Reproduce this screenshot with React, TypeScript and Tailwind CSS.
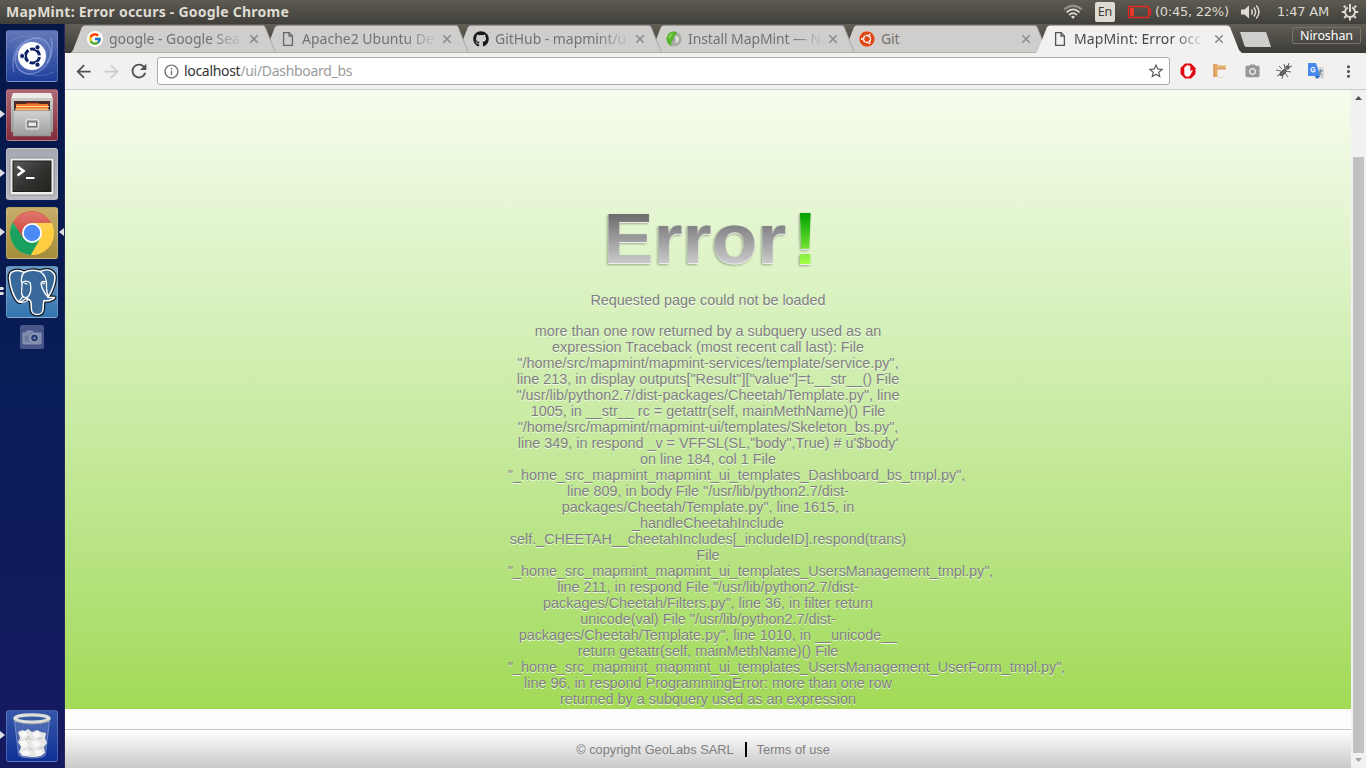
import React from "react";
import { FcGoogle } from "react-icons/fc";
import { FaUbuntu, FaGithub } from "react-icons/fa";
import {
  MdArrowBack,
  MdArrowForward,
  MdRefresh,
  MdInfoOutline,
  MdStarBorder,
  MdMoreVert,
  MdPhotoCamera,
} from "react-icons/md";

const ui = "font-['Noto_Sans',sans-serif]";

function PageIcon({ color }: { color: string }) {
  return (
    <svg width="16" height="16" viewBox="0 0 16 16" fill="none" stroke={color} strokeWidth="1.3">
      <path d="M3.6 1.6h5.6l3.2 3.4v9.4H3.6z" />
      <path d="M9 1.8v3.4h3.2" />
    </svg>
  );
}

function MintIcon() {
  return (
    <svg width="16" height="16" viewBox="0 0 16 16">
      <circle cx="8" cy="8" r="7.6" fill="#a9aca5" />
      <path d="M8 .4a7.6 7.6 0 0 0-2 14.900C3.500 11 7.500 9.500 7.800 7 8 4 10.500 3.500 11 1 10 .5 9 .4 8 .4z" fill="#55b82c" />
      <path d="M9.500 5c2.500 0 3.600 2 3.200 4-.5 2.300-2.600 3.200-4.200 2.700 1.600-1.200 2-2.400 1.400-3.700-.5-1-.9-1.800-.4-3z" fill="#e3e4e2" />
      <path d="M2.500 6c1-2.500 3-3.500 5-3.500-2 1.500-3 3-3.500 6z" fill="#8fdc5e" />
    </svg>
  );
}

function CloseX() {
  return (
    <svg width="10" height="10" viewBox="0 0 10 10" stroke="#8b8a89" strokeWidth="1.6">
      <path d="M1.300 1.300l7.400 7.400M8.700 1.300L1.300 8.700" />
    </svg>
  );
}

function TabShape({ fill, active }: { fill: string; active?: boolean }) {
  return (
    <svg className="absolute inset-0" width="206" height="28" viewBox="0 0 206 28">
      <path d="M0 28 L2 25 L11 2 Q12 .5 14 .5 H191 Q193 .5 194 2 L203 25 L206 28Z" fill={fill} />
      {!active && <path d="M192 .5Q193.500 .5 194 2 L204.500 27.500" fill="none" stroke="#aaa9a6" strokeWidth="1" />}
      {!active && <path d="M0 27.500H206" stroke="#b3b1ae" />}
    </svg>
  );
}

type TabData = { title: string; icon: React.ReactNode; spacing: string; fade: boolean; layer: string };

const tabs: TabData[] = [
  {
    title: "google - Google Sea",
    icon: (
      <span className="flex size-4 items-center justify-center rounded-full bg-white">
        <FcGoogle size={14} />
      </span>
    ),
    spacing: "tracking-[-0.05px]",
    fade: true,
    layer: "z-[5]",
  },
  {
    title: "Apache2 Ubuntu De",
    icon: <PageIcon color="#6a6967" />,
    spacing: "tracking-[0px]",
    fade: true,
    layer: "z-[4]",
  },
  {
    title: "GitHub - mapmint/u",
    icon: <FaGithub size={16} color="#191717" />,
    spacing: "tracking-[-0.05px]",
    fade: true,
    layer: "z-[3]",
  },
  {
    title: "Install MapMint — N",
    icon: <MintIcon />,
    spacing: "tracking-[-0.1px]",
    fade: true,
    layer: "z-[2]",
  },
  {
    title: "Git",
    icon: (
      <span className="flex size-4 items-center justify-center rounded-full bg-white">
        <FaUbuntu size={16} color="#dd4814" />
      </span>
    ),
    spacing: "tracking-[-0.2px]",
    fade: false,
    layer: "z-[1]",
  },
  {
    title: "MapMint: Error occ",
    icon: <PageIcon color="#555" />,
    spacing: "tracking-[0.1px]",
    fade: true,
    layer: "z-10",
  },
];

function Tab({ tab, active }: { tab: TabData; active: boolean }) {
  return (
    <div className={`relative mr-[-13px] h-7 w-[206px] shrink-0 ${tab.layer}`}>
      <TabShape fill={active ? "#f2f1f0" : "#d0cecd"} active={active} />
      <div className="relative flex h-7 items-center pl-4">
        <div className="flex size-4 shrink-0">{tab.icon}</div>
        <div className="ml-1.5 w-[134px] shrink-0">
          <span
            className={`inline-block whitespace-nowrap text-[14px] leading-7 ${ui} ${tab.spacing} ${
              active ? "text-[#4b4a49]" : "text-[#737271]"
            } ${tab.fade ? "[mask-image:linear-gradient(to_right,#000_78%,transparent_103%)]" : ""}`}
          >
            {tab.title}
          </span>
        </div>
        <div className="ml-1.5">
          <CloseX />
        </div>
      </div>
    </div>
  );
}

function TopPanel() {
  return (
    <div className="flex h-6 shrink-0 items-center bg-linear-to-b from-[#5d5b51] to-[#403f3a] text-[#dfdbd2]">
      <div className={`pl-1.5 text-[14px] font-bold leading-6 tracking-[0.240px] whitespace-nowrap ${ui}`}>
        MapMint: Error occurs - Google Chrome
      </div>
      <div className="ml-auto flex h-6 items-center pr-[7px] font-['DejaVu_Sans',sans-serif] text-[13px]">
        <svg width="20" height="16" viewBox="0 0 20 16" fill="none" strokeLinecap="butt">
          <path d="M1 5.500Q10-2 19 5.500" stroke="#98958c" strokeWidth="1.700" />
          <path d="M3.500 8.300Q10 2.500 16.500 8.300" stroke="#dfdbd2" strokeWidth="1.700" />
          <path d="M6 11Q10 7.300 14 11" stroke="#dfdbd2" strokeWidth="1.700" />
          <path d="M8 12.500Q10 11 12 12.500L10 15z" fill="#dfdbd2" />
        </svg>
        <div className={`ml-3 flex h-5 w-5 items-center justify-center rounded-[2px] bg-[#dfdbd2] text-[12.500px] text-[#3c3b37] ${ui}`}>
          En
        </div>
        <svg className="ml-3" width="25" height="14" viewBox="0 0 25 14">
          <path d="M1.500 1.500h20v11h-20zM22 4.500h1.500v5H22" fill="none" stroke="#e5281f" strokeWidth="1.300" />
          <rect x="3" y="3" width="4" height="8" fill="#e5382f" />
        </svg>
        <div className="ml-[3px] w-[74px] whitespace-nowrap tracking-[-0.250px]">(0:45, 22%)</div>
        <svg className="ml-[11px]" width="21" height="16" viewBox="0 0 21 16">
          <path d="M1 5.500h3.500L9 1.500v13L4.500 10.500H1z" fill="#dfdbd2" />
          <path d="M11.300 5.500q2 2.500 0 5M13.800 3.500q3.600 4.500 0 9M16.300 1.500q5.400 6.500 0 13" fill="none" stroke="#dfdbd2" strokeWidth="1.500" />
        </svg>
        <div className="ml-4 w-[52px] whitespace-nowrap tracking-[-0.200px]">1:47 AM</div>
        <svg className="ml-3" width="18" height="18" viewBox="0 0 18 18" fill="none" stroke="#dfdbd2">
          <path d="M6.800 4.500a5 5 0 1 0 4.400 0" strokeWidth="2" />
          <path d="M9 1v8" strokeWidth="2" />
          <path d="M4.500 4.500L2.800 2.800M13.500 4.500l1.700-1.700M3.500 9H.8M14.500 9h2.700M5 13l-1.800 2M13 13l1.800 2M9 15v2.500" strokeWidth="2" />
        </svg>
      </div>
    </div>
  );
}

function Tile({
  className,
  children,
  running,
  focused,
}: {
  className: string;
  children: React.ReactNode;
  running?: number;
  focused?: boolean;
}) {
  return (
    <div className={`relative mx-auto size-[52px] shrink-0 rounded-[3px] border border-white/20 ${className}`}>
      <div className="-m-px">{children}</div>
      {running === 1 && (
        <svg className="absolute top-[19px] -left-[7px]" width="5" height="10" viewBox="0 0 5 10">
          <path d="M0 1l5 4-5 4z" fill="#dcdee4" />
        </svg>
      )}
      {running === 2 && (
        <svg className="absolute top-[20px] -left-[7px]" width="5" height="8" viewBox="0 0 5 8">
          <path d="M0 0h3l1 1.500L3 3H0zM0 5h3l1 1.500L3 8H0z" fill="#dcdee4" />
        </svg>
      )}
      {focused && (
        <svg className="absolute top-[19px] -right-[7px]" width="5" height="10" viewBox="0 0 5 10">
          <path d="M5 1L0 5l5 4z" fill="#dcdee4" />
        </svg>
      )}
    </div>
  );
}

function DashArt() {
  return (
    <svg width="52" height="52" viewBox="0 0 52 52" fill="none">
      <defs>
        <radialGradient id="dashGlow">
          <stop offset="0" stopColor="#cfdcff" stopOpacity=".9" />
          <stop offset="1" stopColor="#86a0e6" stopOpacity="0" />
        </radialGradient>
      </defs>
      <circle cx="26" cy="26" r="20" fill="url(#dashGlow)" />
      <path d="M8 42C3 24 16 8 32 8c12 1 16 16 9 25" stroke="#a9baf0" strokeOpacity=".5" strokeWidth="1.300" />
      <path d="M45 8c5 20-8 36-22 36-12-1-17-13-11-23" stroke="#a9baf0" strokeOpacity=".5" strokeWidth="1.300" />
      <path d="M3 12q22-13 38 3M48 42q-18 9-36-3" stroke="#a9baf0" strokeOpacity=".25" />
      <circle cx="26" cy="26" r="14" fill="#fff" />
      <circle cx="26.500" cy="26" r="7" stroke="#0e2366" strokeWidth="3" strokeDasharray="12.700 2" strokeDashoffset="-1" />
      <circle cx="16.200" cy="26" r="2.500" fill="#0e2366" stroke="#fff" strokeWidth=".8" />
      <circle cx="31.500" cy="17.300" r="2.500" fill="#0e2366" stroke="#fff" strokeWidth=".8" />
      <circle cx="31.500" cy="34.700" r="2.500" fill="#0e2366" stroke="#fff" strokeWidth=".8" />
    </svg>
  );
}

function FilesArt() {
  return (
    <svg width="52" height="52" viewBox="0 0 52 52">
      <defs>
        <linearGradient id="cab" x1="0" y1="0" x2="0" y2="1">
          <stop offset="0" stopColor="#d2d2d1" />
          <stop offset="1" stopColor="#9c9c9b" />
        </linearGradient>
      </defs>
      <path d="M7 4h38l2 6v33H5V10z" fill="url(#cab)" />
      <path d="M7 4h38l1.500 5H5.500z" fill="#ebebea" />
      <rect x="8" y="12" width="36" height="10" fill="#4b2e28" />
      <path d="M10 15h32v7H10z" fill="#ef7a29" />
      <path d="M10 17.500h33M9 20.200h34" stroke="#fbd9a7" />
      <path d="M20 14.500h13" stroke="#d44b28" />
      <path d="M7 21.500h38v24.500q0 1-1 1H8q-1 0-1-1z" fill="url(#cab)" stroke="#8c8c8b" strokeWidth=".6" />
      <rect x="20" y="30.500" width="12.500" height="9.500" rx="2" fill="#9b9b9a" stroke="#dededd" strokeWidth="1.400" />
      <rect x="22" y="33" width="8.500" height="4.500" fill="#e9e9e8" stroke="#666" strokeWidth=".9" />
    </svg>
  );
}

function TerminalArt() {
  return (
    <svg width="52" height="52" viewBox="0 0 52 52">
      <defs>
        <linearGradient id="scr" x1="0" y1="0" x2="1" y2="1">
          <stop offset="0" stopColor="#5a5a58" />
          <stop offset=".5" stopColor="#333331" />
          <stop offset="1" stopColor="#22221f" />
        </linearGradient>
      </defs>
      <rect x="4" y="10" width="44" height="37" rx="1.500" fill="#eeeeee" stroke="#8e8e8e" />
      <rect x="7" y="13" width="38" height="30.500" fill="url(#scr)" stroke="#1e1e1d" />
      <path d="M11.500 18.500l6 4.500-6 4.500" fill="none" stroke="#fff" strokeWidth="2.600" />
      <path d="M20 30h8.500" stroke="#fff" strokeWidth="2" />
    </svg>
  );
}

function ChromeArt() {
  return (
    <svg width="52" height="52" viewBox="0 0 52 52">
      <defs>
        <linearGradient id="sheen" x1="0" y1="0" x2="0" y2="1">
          <stop offset="0" stopColor="#fff" stopOpacity=".25" />
          <stop offset="1" stopColor="#fff" stopOpacity="0" />
        </linearGradient>
      </defs>
      <circle cx="26" cy="26" r="22" fill="#ffcd40" />
      <path d="M6.950 15A22 22 0 0 0 25 48L34.700 31 26 36 17.300 31 8 14z" fill="#1aa15f" />
      <path d="M45.500 16A22 22 0 0 1 25 48L34.700 31V16z" fill="#ffcd40" />
      <path d="M6.950 15A22 22 0 0 1 45.600 16H26L17.300 31z" fill="#d34a3f" />
      <path d="M4.500 22A22 22 0 0 1 47.500 22Q26 30 4.500 22z" fill="url(#sheen)" />
      <circle cx="26" cy="26" r="10" fill="#fff" />
      <circle cx="26" cy="26" r="8.200" fill="#4c8bf5" />
    </svg>
  );
}

const elephantBody =
  "M18 6.500C12 3 3 4 3.500 12C4 20 8 33 13 36C16 36.500 18 34 20 32.500C22 33 25 34 25 37L25.500 44C26.500 50 36 50 37 44C37.500 40 37 37 38 34.500C42 35.500 47 34 48.500 31.500C46 31.500 44 32 42 31C47 24 50 14 48.500 8.500C45 3 39 3 34 5.500C28 3.500 22 4 18 6.500Z";

function PostgresArt() {
  return (
    <svg width="52" height="52" viewBox="0 0 52 52" strokeLinejoin="round" strokeLinecap="round">
      <path d={elephantBody} fill="#111820" stroke="#111820" strokeWidth="4" />
      <path d={elephantBody} fill="#38699a" stroke="#fff" strokeWidth="1.500" />
      <g fill="none" stroke="#fff" strokeWidth="1.300">
        <path d="M18 6.500C15 10 15 14 16 18C16.500 22 14 27 17 30.500C20 33 23 31 24 27C25.500 23 25 20 24 16.500C21 14.500 18 15 16 17" />
        <path d="M34 5.500C40 9 41 15 40.500 21C40 25 42 27 42 31" />
        <path d="M40 16C37 15 35 15.500 35 18C36 22 38 27 42 31" />
        <path d="M17 30.500C15 33 14 33.500 13 36C17 37 21 36 22 33" />
        <path d="M19 17.300l2 .7M36.500 17l1.700.8" />
      </g>
    </svg>
  );
}

function TrashArt() {
  return (
    <svg width="52" height="52" viewBox="0 0 52 52">
      <path d="M8.500 11l4 33q0 4 13.500 4t13.500-4l4-33z" fill="#9eb1dc" fillOpacity=".28" stroke="#c4cfeb" strokeOpacity=".45" />
      <path d="M12 22l4-2 3 1 3-2 4 3 5-2 4 2 5 1-1 5 2 5-3 4 1 6-4 3-5 1-5 0-9-1-3-4 2-5-3-5 2-4z" fill="#e6e6e4" />
      <path d="M14 23l5-2 3 4-5 3zM26 24l6-3 3 5-5 2zM14 32l6-2 2 6-6 2zM25 32l5-2 5 4-6 4zM15 42l6-2 4 4-6 2zM29 41l6-1 2 4-6 2z" fill="#f8f8f7" />
      <path d="M22 26l3 4M19 30l4-2M32 29l4-1M23 38l4 2M33 39l5-2M13 31l2-2" stroke="#bcbcb9" fill="none" />
      <ellipse cx="26" cy="8.500" rx="17" ry="3.600" fill="#3957a3" stroke="#dededb" strokeWidth="3.400" />
      <path d="M8 10.500q18 7.500 36 0" stroke="#989890" fill="none" strokeWidth=".7" />
    </svg>
  );
}

function Launcher() {
  return (
    <nav className="flex w-[65px] shrink-0 flex-col gap-[7px] border-r border-[#28285c] bg-linear-to-b from-[#051746] via-[#091d58] to-[#151a60] pt-1.5 pb-1.5">
      <Tile className="bg-linear-to-b from-[#6378b8] to-[#1d3d9a]">
        <DashArt />
      </Tile>
      <Tile className="bg-linear-to-b from-[#ad6a76] to-[#822b3c]" running={1}>
        <FilesArt />
      </Tile>
      <Tile className="bg-linear-to-b from-[#a5a8b1] to-[#bbbcc1]" running={1}>
        <TerminalArt />
      </Tile>
      <Tile className="bg-linear-to-b from-[#c7ad69] to-[#a38d38]" running={1} focused>
        <ChromeArt />
      </Tile>
      <Tile className="bg-linear-to-b from-[#6b9ac3] to-[#3274b1]" running={2}>
        <PostgresArt />
      </Tile>
      <div className="mx-auto flex size-6 items-center justify-center rounded-[2px] bg-[#48568a]">
        <svg width="20" height="16" viewBox="0 0 20 16">
          <path d="M1 4h4V2h5l1.500 2H19v11H1z" fill="#7d89aa" stroke="#98a1bc" strokeWidth=".8" />
          <circle cx="12.500" cy="9" r="4" fill="#23356d" stroke="#a2acc4" />
          <circle cx="12.500" cy="9" r="1.500" fill="#6575a5" />
          <path d="M3 7h3v5H3z" fill="#68759b" />
        </svg>
      </div>
      <Tile className="mt-auto bg-linear-to-b from-[#3656a8] to-[#0e3096]" running={1}>
        <TrashArt />
      </Tile>
    </nav>
  );
}

function TabStrip() {
  return (
    <div className="flex h-[29px] shrink-0 items-start bg-linear-to-b from-[#615f55] to-[#3c3b37] pt-px pl-1.5">
      {tabs.map((t, i) => (
        <Tab key={t.title} tab={t} active={i === 5} />
      ))}
      <svg className="mt-[7px] ml-[10px] shrink-0" width="33" height="16" viewBox="0 0 33 16">
        <path d="M1 0h25q1 0 1.500 1L32 15H8q-2 0-2.500-1z" fill="#d0cecd" />
      </svg>
      <div className={`mt-[2px] mr-[5px] ml-auto flex h-[17px] w-[69px] items-center justify-center rounded-[2px] border border-[#77756e] text-[12.500px] leading-4 tracking-[-0.100px] text-white ${ui}`}>
        Niroshan
      </div>
    </div>
  );
}

function Toolbar() {
  return (
    <div className="flex h-[37px] shrink-0 items-center border-b border-[#ccc] bg-[#f2f1f0] pl-2">
      <MdArrowBack size={21} color="#505050" />
      <MdArrowForward className="ml-[7px]" size={21} color="#ccc" />
      <MdRefresh className="ml-[6px]" size={22} color="#505050" />
      <div className="ml-[7px] flex h-7 w-[1013px] items-center rounded-[3px] border border-[#acabaa] bg-white pr-1 pl-[5px]">
        <MdInfoOutline size={17} color="#727272" />
        <div className={`ml-1 text-[14px] leading-6 tracking-[-0.310px] whitespace-nowrap text-[#9b9b9b] ${ui}`}>
          <span className="text-[#333]">localhost</span>/ui/Dashboard_bs
        </div>
        <MdStarBorder className="ml-auto" size={18} color="#5c5c5c" />
      </div>
      <div className="ml-[10px] flex items-center gap-4">
        <svg width="16" height="16" viewBox="0 0 16 16">
          <path d="M5 .5h6L15.500 5v6L11 15.500H5L.5 11V5z" fill="#e00b12" />
          <path d="M4.300 8.500V4.500q.7-.8 1.300 0V7V3q.7-.9 1.500 0v4V2.300q.8-.8 1.500 0V7l.2-4q.8-.8 1.500 0v5.500l1.200-1.300q1.200-.5 1.300.3L10.600 11.500q-1 2.200-3 2.200-3.300 0-3.300-3.700z" fill="#fff" />
        </svg>
        <svg width="16" height="16" viewBox="0 0 16 16">
          <path d="M1.500 1h4v1.500H14v3.500H5.500V14h-4z" fill="#e5a664" />
          <path d="M2 1v13M5.500 6H14" stroke="#c98a4a" strokeWidth=".8" />
          <path d="M3 4h11" stroke="#f4cc99" strokeDasharray="2 1" />
          <path d="M6 14.500h5" stroke="#ddd" />
        </svg>
        <MdPhotoCamera size={17} color="#979797" />
        <svg className="-ml-px" width="16" height="16" viewBox="0 0 16 16" stroke="#555" strokeWidth=".9" fill="#666">
          <ellipse cx="7" cy="9.500" rx="2" ry="4" transform="rotate(45 7 9.500)" />
          <circle cx="11.500" cy="4.500" r="1.800" />
          <path d="M6 6L3 3M5 8L0 7M5 11l-4 2M9 6L8 1M10 8l5 1M9 10l3 4M7 12l-1 4M12 3l1-3M13 4l3-1" fill="none" />
        </svg>
        <svg width="16" height="16" viewBox="0 0 16 16">
          <rect x="6" y="4" width="10" height="11.500" fill="#d7d8da" />
          <path d="M0 0h8l4 13H1q-1 0-1-1z" fill="#4688ec" />
          <path d="M7 13h5l-3 3z" fill="#2462c7" />
          <path d="M7 5.300A2.200 2.200 0 1 0 7 8V6.700H5" stroke="#fff" strokeWidth="1.100" fill="none" />
          <path d="M10 8h5M12.500 6.500V8q0 3-2 4M11 9q1 2 3.500 3.500" stroke="#687c8d" fill="none" />
        </svg>
        <MdMoreVert className="-ml-px" size={19} color="#505050" />
      </div>
    </div>
  );
}

const trace = [
  "more than one row returned by a subquery used as an",
  "expression Traceback (most recent call last): File",
  '"/home/src/mapmint/mapmint-services/template/service.py",',
  'line 213, in display outputs["Result"]["value"]=t.__str__() File',
  '"/usr/lib/python2.7/dist-packages/Cheetah/Template.py", line',
  "1005, in __str__ rc = getattr(self, mainMethName)() File",
  '"/home/src/mapmint/mapmint-ui/templates/Skeleton_bs.py",',
  "line 349, in respond _v = VFFSL(SL,\"body\",True) # u'$body'",
  "on line 184, col 1 File",
  '"_home_src_mapmint_mapmint_ui_templates_Dashboard_bs_tmpl.py",',
  'line 809, in body File "/usr/lib/python2.7/dist-',
  'packages/Cheetah/Template.py", line 1615, in',
  "_handleCheetahInclude",
  "self._CHEETAH__cheetahIncludes[_includeID].respond(trans)",
  "File",
  '"_home_src_mapmint_mapmint_ui_templates_UsersManagement_tmpl.py",',
  'line 211, in respond File "/usr/lib/python2.7/dist-',
  'packages/Cheetah/Filters.py", line 36, in filter return',
  'unicode(val) File "/usr/lib/python2.7/dist-',
  'packages/Cheetah/Template.py", line 1010, in __unicode__',
  "return getattr(self, mainMethName)() File",
  '"_home_src_mapmint_mapmint_ui_templates_UsersManagement_UserForm_tmpl.py",',
  "line 96, in respond ProgrammingError: more than one row",
  "returned by a subquery used as an expression",
];

function ErrorLogo() {
  return (
    <svg width="230" height="92" viewBox="-5 -14 230 92" className="[filter:drop-shadow(-1px_1px_1px_rgba(0,0,0,0.35))]">
      <defs>
        <linearGradient id="grey" gradientUnits="userSpaceOnUse" x1="0" y1="7" x2="0" y2="57">
          <stop offset="0" stopColor="#6c6c6e" />
          <stop offset="1" stopColor="#cbcbce" />
        </linearGradient>
        <linearGradient id="green" gradientUnits="userSpaceOnUse" x1="0" y1="6" x2="0" y2="57">
          <stop offset="0" stopColor="#00a000" />
          <stop offset="1" stopColor="#a4ff48" />
        </linearGradient>
      </defs>
      <g className="font-['Liberation_Sans',sans-serif] font-bold">
        <text x="5.500" y="56" fontSize="71" textLength="183" lengthAdjust="spacingAndGlyphs" fill="url(#grey)">
          Error
        </text>
        <text x="195" y="57" fontSize="74" fill="url(#green)">
          !
        </text>
      </g>
    </svg>
  );
}

function ErrorPage() {
  return (
    <main className="flex min-w-0 flex-1 flex-col font-['Liberation_Sans',Arial,sans-serif]">
      <section className="flex h-[619px] shrink-0 justify-center bg-linear-to-b from-[#f6fcee] to-[#a2da56]">
        <div className="w-[400px] pt-[103px] text-center text-[14.400px] leading-4 text-[#808080] [text-shadow:0_1px_0_#ffffffcc]">
          <div className="flex h-[92px] justify-center">
            <ErrorLogo />
          </div>
          <p className="mt-[7px]">Requested page could not be loaded</p>
          <div className="mt-[15px]">
            {trace.map((line) => (
              <p key={line} className="whitespace-nowrap">
                {line}
              </p>
            ))}
          </div>
        </div>
      </section>
      <div className="h-5 shrink-0 bg-[#fdfefb]" />
      <footer className="flex flex-1 items-center justify-center border-t border-[#c5c5c5] bg-linear-to-b from-white to-[#c9c9c9] pt-px pr-2.5 text-[12.800px] text-[#808080]">
        <span>© copyright GeoLabs SARL</span>
        <span className="mb-px ml-[11px] h-[15px] w-0.5 bg-black" />
        <span className="ml-2.5">Terms of use</span>
      </footer>
    </main>
  );
}

function Scrollbar() {
  return (
    <div className="flex w-[15px] shrink-0 flex-col items-center bg-[#f1f1f1] pt-1.5 pb-[5px]">
      <svg width="7" height="4" viewBox="0 0 7 4">
        <path d="M0 4l3.500-4L7 4z" fill="#505050" />
      </svg>
      <div className="mt-[57px] h-[596px] w-[11px] bg-[#c1c1c1]" />
      <svg className="mt-[5px]" width="7" height="4" viewBox="0 0 7 4">
        <path d="M0 0l3.500 4L7 0z" fill="#a3a3a3" />
      </svg>
    </div>
  );
}

export default function App() {
  return (
    <div className="flex h-[768px] w-[1366px] flex-col overflow-hidden bg-white">
      <TopPanel />
      <div className="flex min-h-0 flex-1">
        <Launcher />
        <div className="flex min-w-0 flex-1 flex-col">
          <TabStrip />
          <Toolbar />
          <div className="flex min-h-0 flex-1">
            <ErrorPage />
            <Scrollbar />
          </div>
        </div>
      </div>
    </div>
  );
}
